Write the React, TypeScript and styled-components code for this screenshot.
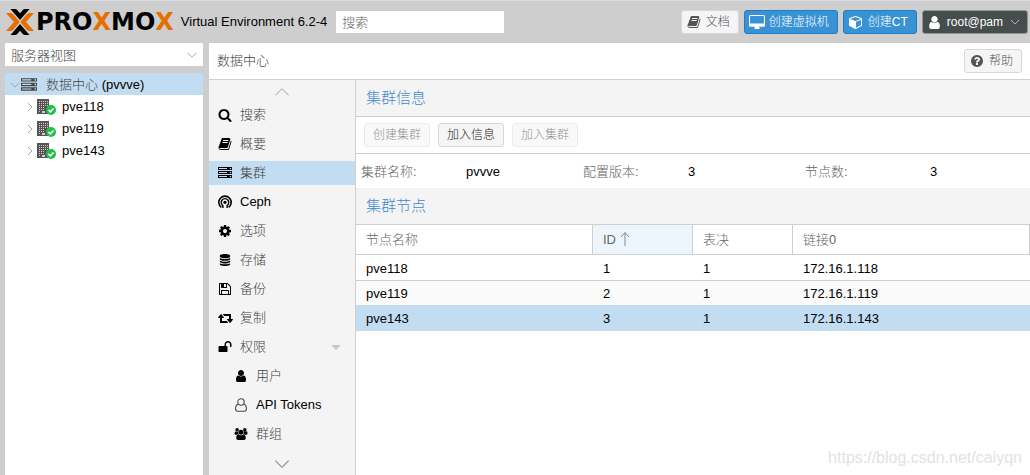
import React from 'react';
import styled, { createGlobalStyle } from 'styled-components';

const color = {
  frame: '#cecece',
  line: '#cfcfcf',
  pale: '#f4f4f4',
  selected: '#c2ddf2',
  blue: '#3892d4',
  heading: '#4189cc',
  ink: '#000',
  soft: '#444',
  label: '#666',
};

const sans = '"Liberation Sans", "Noto Sans CJK SC", sans-serif';

const GlobalStyle = createGlobalStyle`
  *, *::before, *::after { box-sizing: border-box; }
  body { margin: 0; background: ${color.frame}; color: ${color.ink}; }
  body, button, input, select, table { font-family: ${sans}; font-size: 13px; font-weight: 300; line-height: 20px; }
  ul, dl, dd, h1, h2 { margin: 0; padding: 0; font-weight: 300; }
  ul { list-style: none; }
  svg { display: block; flex: none; }
`;

/* ---------- icons ---------- */

const circle =
  'M1664 896q0 209-103 385.5t-279.5 279.5-385.5 103-385.5-103-279.5-279.5-103-385.5 103-385.5 279.5-279.5 385.5-103 385.5 103 279.5 279.5 103 385.5z';
const stack =
  'q237 0 443-43t325-127v170q0 69-103 128t-280 93.5-385 34.5-385-34.5-280-93.5-103-128v-170q119 84 325 127t443 43z';
const dot = 'q0-40-28-68t-68-28-68 28-28 68 28 68 68 28 68-28 28-68z';
const bookLine = 'q-4 13 2 22.5t20 9.5h608q13 0 25.5-9.5t16.5-22.5l21-64q4-13-2-22.5t-20-9.5h-608q-13 0-25.5 9.5t-16.5 22.5z';

const icons = {
  search: { w: 1792, d: 'M1216 832q0-185-131.5-316.5t-316.5-131.5-316.5 131.5-131.5 316.5 131.5 316.5 316.5 131.5 316.5-131.5 131.5-316.5zm512 832q0 52-38 90t-90 38q-54 0-90-38l-343-342q-179 124-399 124-143 0-273.5-55.5t-225-150-150-225-55.5-273.5 55.5-273.5 150-225 225-150 273.5-55.5 273.5 55.5 225 150 150 225 55.5 273.5q0 220-124 399l343 343q37 37 37 90z' },
  book: { w: 1792, d: 'M1703 478q40 57 18 129l-275 906q-19 64-76.5 107.5t-122.5 43.5h-923q-77 0-148.5-53.5t-99.5-131.5q-24-67-2-127 0-4 3-27t4-37q1-8-3-21.5t-3-19.5q2-11 8-21t16.5-23.5 16.5-23.5q23-38 45-91.5t30-91.5q3-10 .5-30t-.5-28q3-11 17-28t17-23q21-36 42-92t25-90q1-9-2.5-32t.5-28q4-13 22-30.5t22-22.5q19-26 42.5-84.5t27.5-96.5q1-8-3-25.5t-2-26.5q2-8 9-18t18-23 17-21q8-12 16.5-30.5t15-35 16-36 19.5-32 26.5-23.5 36-11.5 47.5 5.5l-1 3q38-9 51-9h761q74 0 114 56t18 130l-274 906q-36 119-71.5 153.5t-128.5 34.5h-869q-27 0-38 15-11 16-1 43 24 70 144 70h923q29 0 56-15.5t35-41.5l300-987q7-22 5-57 38 15 59 43z' + 'M639 480' + bookLine + 'M556 736' + bookLine },
  server: { w: 1792, d: 'M128 1408h1024v-128h-1024v128zM128 896h1024v-128h-1024v128zM1696 1344' + dot + 'M128 384h1024v-128h-1024v128zM1696 832' + dot + 'M1696 320' + dot + 'M1792 1152v384h-1792v-384h1792zM1792 640v384h-1792v-384h1792zM1792 128v384h-1792v-384h1792z' },
  cog: { w: 1792, d: 'M1152 896q0-106-75-181t-181-75-181 75-75 181 75 181 181 75 181-75 75-181zm512-109v222q0 12-8 23t-20 13l-185 28q-19 54-39 91 35 50 107 138 10 12 10 25t-9 23q-27 37-99 108t-94 71q-12 0-26-9l-138-108q-44 23-91 38-16 136-29 186-7 28-36 28h-222q-14 0-24.5-8.5t-11.5-21.5l-28-184q-49-16-90-37l-141 107q-10 9-25 9-14 0-25-11-126-114-165-168-7-10-7-23 0-12 8-23 15-21 51-66.5t54-70.5q-27-50-41-99l-183-27q-13-2-21-12.5t-8-23.5v-222q0-12 8-23t19-13l186-28q14-46 39-92-40-57-107-138-10-12-10-24 0-10 9-23 26-36 98.5-107.5t94.5-71.5q13 0 26 10l138 107q44-23 91-38 16-136 29-186 7-28 36-28h222q14 0 24.5 8.5t11.5 21.5l28 184q49 16 90 37l142-107q9-9 24-9 13 0 25 10 129 119 165 170 7 8 7 22 0 12-8 23-15 21-51 66.5t-54 70.5q26 50 41 98l183 28q13 2 21 12.5t8 23.5z' },
  database: { w: 1792, d: 'M896 768' + stack + 'M896 1536' + stack + 'M896 1152' + stack + 'M896 0q208 0 385 34.5t280 93.5 103 128v128q0 69-103 128t-280 93.5-385 34.5-385-34.5-280-93.5-103-128v-128q0-69 103-128t280-93.5 385-34.5z' },
  floppy: { w: 1792, d: 'M512 1536h768v-384h-768v384zm896 0h128v-896q0-14-10-38.5t-20-34.5l-281-281q-10-10-34-20t-39-10v416q0 40-28 68t-68 28h-576q-40 0-68-28t-28-68v-416h-128v1280h128v-416q0-40 28-68t68-28h832q40 0 68 28t28 68v416zm-384-928v-320q0-13-9.5-22.5t-22.5-9.5h-192q-13 0-22.5 9.5t-9.5 22.5v320q0 13 9.5 22.5t22.5 9.5h192q13 0 22.5-9.5t9.5-22.5zm640 32v928q0 40-28 68t-68 28h-1344q-40 0-68-28t-28-68v-1344q0-40 28-68t68-28h928q40 0 88 20t76 48l280 280q28 28 48 76t20 88z' },
  retweet: { w: 1920, d: 'M1280 1504q0 13-9.5 22.5t-22.5 9.5h-960q-8 0-13.5-2t-9-7-5.5-8-3-11.5-1-11.5v-600h-192q-26 0-45-19t-19-45q0-24 15-41l320-384q19-22 49-22t49 22l320 384q15 17 15 41 0 26-19 45t-45 19h-192v384h576q16 0 25 11l160 192q7 10 7 21zm640-416q0 24-15 41l-320 384q-20 23-49 23t-49-23l-320-384q-15-17-15-41 0-26 19-45t45-19h192v-384h-576q-16 0-25-12l-160-192q-7-9-7-20 0-13 9.5-22.5t22.5-9.5h960q8 0 13.5 2t9 7 5.5 8 3 11.5 1 11.5v600h192q26 0 45 19t19 45z' },
  unlock: { w: 1792, d: 'M1728 576v256q0 26-19 45t-45 19h-64q-26 0-45-19t-19-45v-256q0-106-75-181t-181-75-181 75-75 181v192h96q40 0 68 28t28 68v576q0 40-28 68t-68 28h-960q-40 0-68-28t-28-68v-576q0-40 28-68t68-28h672v-192q0-185 131.5-316.5t316.5-131.5 316.5 131.5 131.5 316.5z' },
  user: { w: 1792, d: 'M1536 1399q0 109-62.5 187t-150.5 78h-854q-88 0-150.5-78t-62.5-187q0-85 8.5-160.5t31.5-152 58.5-131 94-89 134.5-34.5q131 128 313 128t313-128q76 0 134.5 34.5t94 89 58.5 131 31.5 152 8.5 160.5zm-256-887q0 159-112.5 271.5t-271.5 112.5-271.5-112.5-112.5-271.5 112.5-271.5 271.5-112.5 271.5 112.5 112.5 271.5z' },
  users: { w: 2048, d: 'M657 896q-162 5-265 128h-134q-82 0-138-40.5t-56-118.5q0-353 124-353 6 0 43.5 21t97.5 42.5 119 21.5q67 0 133-23-5 37-5 66 0 159 93 293zm1071 637q0 120-73 189.5t-194 69.5h-874q-121 0-194-69.5t-73-189.5q0-53 3.5-103.5t14-109 26.5-108.5 43-97.5 62-81 85.5-53.5 111.5-20q10 0 43 21.5t73 48 107 48 135 21.5 135-21.5 107-48 73-48 43-21.5q61 0 111.5 20t85.5 53.5 62 81 43 97.5 26.5 108.5 14 109 3.5 103.5zm-1024-1277q0 106-75 181t-181 75-181-75-75-181 75-181 181-75 181 75 75 181zm704 384q0 159-112.5 271.5t-271.5 112.5-271.5-112.5-112.5-271.5 112.5-271.5 271.5-112.5 271.5 112.5 112.5 271.5zm576 225q0 78-56 118.5t-138 40.5h-134q-103-123-265-128 93-134 93-293 0-29-5-66 66 23 133 23 59 0 119-21.5t97.5-42.5 43.5-21q124 0 124 353zm-128-609q0 106-75 181t-181 75-181-75-75-181 75-181 181-75 181 75 75 181z' },
  desktop: { w: 1920, d: 'M1792 992v-832q0-13-9.5-22.5t-22.5-9.5h-1600q-13 0-22.5 9.5t-9.5 22.5v832q0 13 9.5 22.5t22.5 9.5h1600q13 0 22.5-9.5t9.5-22.5zm128-832v1088q0 66-47 113t-113 47h-544q0 37 16 77.5t32 71 16 43.5q0 26-19 45t-45 19h-512q-26 0-45-19t-19-45q0-14 16-44t32-70 16-78h-544q-66 0-113-47t-47-113v-1088q0-66 47-113t113-47h1600q66 0 113 47t47 113z' },
  cube: { w: 1664, d: 'M896 1629l640-349v-636l-640 233v752zm-64-865l698-254-698-254-698 254zm832-252v768q0 35-18 65t-49 47l-704 384q-28 16-61 16t-61-16l-704-384q-31-17-49-47t-18-65v-768q0-40 23-73t61-47l704-256q22-8 44-8t44 8l704 256q38 14 61 47t23 73z' },
  question: { w: 1792, d: 'M1024 1376v-192q0-14-9-23t-23-9h-192q-14 0-23 9t-9 23v192q0 14 9 23t23 9h192q14 0 23-9t9-23zm256-672q0-88-55.5-163t-138.5-116-170-41q-243 0-371 213-15 24 8 42l132 100q7 6 19 6 16 0 25-12 53-68 86-92 34-24 86-24 48 0 85.5 26t37.5 59q0 38-20 61t-68 45q-63 28-115.5 86.5t-52.5 125.5v36q0 14 9 23t23 9h192q14 0 23-9t9-23q0-19 21.5-49.5t54.5-49.5q32-18 49-28.5t46-35 44.5-48 28-60.5 12.5-81z' + circle },
};

type IconName = keyof typeof icons;

const Icon = ({ name, size = 14 }: { name: IconName; size?: number }) => {
  const { w, d } = icons[name];
  return (
    <svg width={Math.round((size * w) / 1792)} height={size} viewBox={`0 0 ${w} 1792`} fill="currentColor" fillRule="evenodd" aria-hidden="true">
      <path d={d} />
    </svg>
  );
};

const CephIcon = () => (
  <svg width="14" height="14" viewBox="0 0 14 14" fill="none" stroke="currentColor" strokeWidth="1.6" aria-hidden="true">
    <path d="M3.4 12.4A6.2 6.2 0 1 1 10.6 12.4" />
    <path d="M4.9 12.9V10.6A3.8 3.8 0 1 1 9.1 10.6V12.9" strokeWidth="1.4" />
    <circle cx="7" cy="7.3" r="1.6" fill="currentColor" stroke="none" />
  </svg>
);

const UserOutlineIcon = () => (
  <svg width="14" height="14" viewBox="0 0 14 14" fill="none" stroke="#3b4a55" strokeWidth="1.1" aria-hidden="true">
    <circle cx="7" cy="4" r="3.2" />
    <path d="M4.4 6.2C2.4 6.6 1.6 8.6 1.6 10.8C1.6 12.4 2.4 13.2 3.6 13.2H10.4C11.6 13.2 12.4 12.4 12.4 10.8C12.4 8.6 11.6 6.6 9.6 6.2" />
  </svg>
);

const NodeIcon = () => (
  <svg width="20" height="16" viewBox="0 0 20 16" aria-hidden="true">
    <path fill="#555" d="M0 0H12V15H0Z" />
    <path fill="#d2cdc4" d="M2 2h1v1h-1zM4 2h1v1h-1zM6 2h1v1h-1zM8 2h1v1h-1zM10 2h1v1h-1zM2 4h1v1h-1zM4 4h1v1h-1zM6 4h1v1h-1zM8 4h1v1h-1zM10 4h1v1h-1zM2 6h1v1h-1zM4 6h1v1h-1zM6 6h1v1h-1zM8 6h1v1h-1zM10 6h1v1h-1zM2 8h1v1h-1zM4 8h1v1h-1zM6 8h1v1h-1zM2 10h1v1h-1zM4 10h1v1h-1zM6 10h1v1h-1zM2 12h1v1h-1zM5 12h3v2h-3z" />
    <circle cx="14" cy="11" r="5" fill="#21bf4b" />
    <path d="M11.500 11L13.300 12.800L16.500 9.500" fill="none" stroke="#fff" strokeWidth="1.6" />
  </svg>
);

const paths = {
  down: 'M1 1L6 6L11 1',
  up: 'M1 6L6 1L11 6',
};

const Chevron = ({ to, width = 10, stroke = '#999' }: { to: 'up' | 'down'; width?: number; stroke?: string }) => (
  <svg width={width} height={Math.round(width * 0.6)} viewBox="0 0 12 7" fill="none" stroke={stroke} strokeWidth={width > 12 ? 0.8 : 1} aria-hidden="true">
    <path d={paths[to]} />
  </svg>
);

const Expander = () => (
  <svg width="6" height="10" viewBox="0 0 6 10" fill="none" stroke="#aaa" aria-hidden="true">
    <path d="M1 1L5 5L1 9" />
  </svg>
);

const SortArrow = () => (
  <svg width="10" height="14" viewBox="0 0 10 14" fill="none" stroke="#888" aria-hidden="true">
    <path d="M5 0.7V14M1 5L5 0.7L9 5" />
  </svg>
);

const LogoMark = () => (
  <svg width="28" height="26" viewBox="0 0 28 26" aria-hidden="true">
    <g fill="#e57000">
      <path d="M0 4H4.5Q6 4 7 5L13 12Q13.8 13 13 14L7 21Q6 22 4.5 22H0L8 13Z" />
      <path d="M28 4H23.5Q22 4 21 5L15 12Q14.2 13 15 14L21 21Q22 22 23.5 22H28L20 13Z" />
    </g>
    <g fill="#000">
      <path d="M4.500 0H9Q10.300 0 11.200 1L14 4.300L16.800 1Q17.700 0 19 0H23.500L14 11Z" />
      <path d="M4.500 26H9Q10.300 26 11.200 25L14 21.700L16.800 25Q17.700 26 19 26H23.500L14 15Z" />
    </g>
  </svg>
);

/* ---------- shell ---------- */

const Page = styled.div`
  min-height: 100vh;
  display: flex;
  flex-direction: column;
  background: ${color.frame};
`;

const TopBar = styled.header`
  display: flex;
  align-items: center;
  height: 43px;
  padding: 0 2px 0 6px;
  border-top: 1px solid #dadbe2;
`;

const Logo = styled.a`
  display: flex;
  align-items: center;
  gap: 2px;
  margin-right: 7px;
  color: #000;
  text-decoration: none;
`;

const Wordmark = styled.span`
  font: 700 24px/26px "DejaVu Sans", sans-serif;
  b { color: #e57000; }
`;

const Product = styled.span`
  margin-right: 9px;
  white-space: nowrap;
`;

const SearchBox = styled.input`
  width: 168px;
  height: 22px;
  padding: 0 6px;
  border: 0;
  border-radius: 0;
  background: #fff;
  &::placeholder { color: ${color.label}; opacity: 1; }
`;

const Actions = styled.div`
  display: flex;
  gap: 5px;
  margin-left: auto;
`;

const tones = {
  plain: { bg: '#f5f5f5', edge: '#d8d8d8', text: '#555', right: 8 },
  primary: { bg: '#3892d4', edge: '#1f7dc4', text: '#fff', right: 8 },
  dark: { bg: '#464d4d', edge: '#8a9a98', text: '#fff', right: 4 },
};

const Button = styled.button<{ $tone?: keyof typeof tones }>`
  display: flex;
  align-items: center;
  gap: 4px;
  height: 24px;
  padding: 0 ${p => tones[p.$tone ?? 'plain'].right}px 0 4px;
  border: 1px solid ${p => tones[p.$tone ?? 'plain'].edge};
  border-radius: 3px;
  background: ${p => tones[p.$tone ?? 'plain'].bg};
  color: ${p => tones[p.$tone ?? 'plain'].text};
  font-size: 12px;
  white-space: nowrap;
`;

const IconCell = styled.span`
  display: flex;
  justify-content: center;
  flex: none;
  width: 16px;
`;

const Body = styled.div`
  flex: 1;
  display: flex;
  gap: 6px;
  padding-left: 5px;
`;

/* ---------- resource tree ---------- */

const Sidebar = styled.aside`
  flex: none;
  display: flex;
  flex-direction: column;
  gap: 7px;
  width: 198px;
`;

const SelectWrap = styled.div`
  position: relative;
  svg { position: absolute; right: 6px; top: 9px; pointer-events: none; }
`;

const ViewSelect = styled.select`
  display: block;
  width: 100%;
  height: 23px;
  padding: 2px 6px 0;
  border: 0;
  border-radius: 0;
  background: #fff;
  color: ${color.soft};
  appearance: none;
`;

const Tree = styled.ul`
  flex: 1;
  background: #fff;
`;

const TreeRow = styled.a<{ $root?: boolean }>`
  display: flex;
  align-items: center;
  gap: ${p => (p.$root ? 1 : 4)}px;
  height: 22px;
  padding-top: 2px;
  padding-left: ${p => (p.$root ? 5 : 22)}px;
  background: ${p => (p.$root ? color.selected : 'transparent')};
  color: ${color.ink};
  text-decoration: none;
`;

const TreeLabel = styled.span<{ $gap?: number }>`
  padding-left: ${p => p.$gap ?? 0}px;
`;

const Cjk = styled.span`
  color: ${color.soft};
`;

/* ---------- main panel ---------- */

const Main = styled.main`
  flex: 1;
  display: flex;
  flex-direction: column;
  min-width: 0;
  background: #fff;
`;

const TitleBar = styled.div`
  display: flex;
  align-items: center;
  justify-content: space-between;
  height: 37px;
  padding: 0 8px;
  border-bottom: 1px solid ${color.line};
  h1 { font-size: 13px; color: ${color.soft}; }
`;

const Split = styled.div`
  flex: 1;
  display: flex;
`;

const Nav = styled.nav`
  flex: none;
  display: flex;
  flex-direction: column;
  width: 147px;
  border-right: 1px solid ${color.line};
  background: ${color.pale};
`;

const Scroller = styled.button`
  display: flex;
  align-items: center;
  justify-content: center;
  height: 23px;
  padding: 0;
  border: 0;
  background: none;
`;

const NavList = styled.ul`
  display: flex;
  flex-direction: column;
  gap: 5px;
  padding-bottom: 6px;
`;

const NavLink = styled.a<{ $active?: boolean; $nested?: boolean }>`
  display: flex;
  align-items: center;
  gap: 7px;
  height: 24px;
  padding: 0 14px 0 ${p => (p.$nested ? 24 : 8)}px;
  background: ${p => (p.$active ? color.selected : 'transparent')};
  color: ${color.ink};
  text-decoration: none;
`;

const Caret = styled.i`
  margin-left: auto;
  border: 5px solid transparent;
  border-top-color: #c8c8c8;
  border-bottom: 0;
`;

const Content = styled.section`
  position: relative;
  flex: 1;
  min-width: 0;
`;

const SectionTitle = styled.h2`
  height: 37px;
  padding: 0 10px;
  border-bottom: 1px solid ${color.line};
  background: ${color.pale};
  color: ${color.heading};
  font-size: 15px;
  line-height: 36px;
`;

const Toolbar = styled.div`
  display: flex;
  align-items: center;
  gap: 8px;
  height: 37px;
  padding: 0 8px;
  border-bottom: 1px solid ${color.line};
`;

const ToolButton = styled(Button)`
  padding: 0 8px;
  color: #222;
  &:disabled { opacity: 0.5; }
`;

const Facts = styled.dl`
  display: grid;
  grid-template-columns: repeat(3, 1fr);
  height: 34px;
  padding: 2px 3px 0 5px;
  align-items: center;
`;

const Fact = styled.div<{ $label?: number }>`
  display: grid;
  grid-template-columns: ${p => p.$label ?? 105}px 1fr;
  dt { color: ${color.label}; }
`;

const Grid = styled.table`
  width: 100%;
  table-layout: fixed;
  border-collapse: separate;
  border-spacing: 0;
`;

const HeadCell = styled.th<{ $sorted?: boolean }>`
  height: 30px;
  padding: 0 10px;
  border-right: 1px solid ${color.line};
  border-bottom: 1px solid ${color.line};
  background: ${p => (p.$sorted ? '#edf5fc' : '#fff')};
  color: ${color.label};
  font-weight: 300;
  text-align: left;
  svg { display: inline-block; margin-left: 4px; vertical-align: -2px; }
`;

const Row = styled.tr<{ $state?: 'alt' | 'selected' }>`
  background: ${p => (p.$state === 'selected' ? color.selected : p.$state === 'alt' ? '#fafafa' : '#fff')};
  td {
    height: ${p => (p.$state === 'alt' ? 24 : 26)}px;
    padding: 2px 10px 0;
    border-bottom: ${p => (p.$state ? '0' : `1px solid ${color.line}`)};
  }
`;

const Watermark = styled.div`
  position: absolute;
  right: 8px;
  bottom: 5px;
  color: #e2e2e2;
  font-size: 16px;
  line-height: 24px;
`;

/* ---------- data ---------- */

const nav: { label: string; icon: IconName | 'ceph' | 'userOutline'; latin?: boolean; active?: boolean; nested?: boolean; open?: boolean }[] = [
  { label: '搜索', icon: 'search' },
  { label: '概要', icon: 'book' },
  { label: '集群', icon: 'server', active: true },
  { label: 'Ceph', icon: 'ceph', latin: true },
  { label: '选项', icon: 'cog' },
  { label: '存储', icon: 'database' },
  { label: '备份', icon: 'floppy' },
  { label: '复制', icon: 'retweet' },
  { label: '权限', icon: 'unlock', open: true },
  { label: '用户', icon: 'user', nested: true },
  { label: 'API Tokens', icon: 'userOutline', latin: true, nested: true },
  { label: '群组', icon: 'users', nested: true },
];

const nodes: { name: string; id: number; votes: number; link: string; state?: 'alt' | 'selected' }[] = [
  { name: 'pve118', id: 1, votes: 1, link: '172.16.1.118' },
  { name: 'pve119', id: 2, votes: 1, link: '172.16.1.119', state: 'alt' },
  { name: 'pve143', id: 3, votes: 1, link: '172.16.1.143', state: 'selected' },
];

const NavIcon = ({ icon }: { icon: (typeof nav)[number]['icon'] }) => {
  if (icon === 'ceph') return <CephIcon />;
  if (icon === 'userOutline') return <UserOutlineIcon />;
  return <Icon name={icon} size={icon === 'users' || icon === 'database' ? 12 : 14} />;
};

export default function App() {
  return (
    <Page>
      <GlobalStyle />
      <TopBar>
        <Logo href="#" aria-label="Proxmox">
          <LogoMark />
          <Wordmark>PRO<b>X</b>MO<b>X</b></Wordmark>
        </Logo>
        <Product>Virtual Environment 6.2-4</Product>
        <SearchBox type="text" placeholder="搜索" aria-label="搜索" />
        <Actions>
          <Button><IconCell><Icon name="book" /></IconCell>文档</Button>
          <Button $tone="primary"><IconCell><Icon name="desktop" size={15} /></IconCell>创建虚拟机</Button>
          <Button $tone="primary"><IconCell><Icon name="cube" /></IconCell>创建CT</Button>
          <Button $tone="dark">
            <IconCell><Icon name="user" size={15} /></IconCell>
            root@pam
            <IconCell><Chevron to="down" stroke="#ccc" /></IconCell>
          </Button>
        </Actions>
      </TopBar>

      <Body>
        <Sidebar>
          <SelectWrap>
            <ViewSelect aria-label="服务器视图">
              <option>服务器视图</option>
            </ViewSelect>
            <Chevron to="down" />
          </SelectWrap>
          <Tree>
            <li>
              <TreeRow href="#" $root>
                <Chevron to="down" />
                <Cjk><Icon name="server" size={16} /></Cjk>
                <TreeLabel $gap={8}><Cjk>数据中心</Cjk> (pvvve)</TreeLabel>
              </TreeRow>
              <ul>
                {nodes.map(n => (
                  <li key={n.name}>
                    <TreeRow href="#">
                      <Expander />
                      <NodeIcon />
                      <TreeLabel $gap={1}>{n.name}</TreeLabel>
                    </TreeRow>
                  </li>
                ))}
              </ul>
            </li>
          </Tree>
        </Sidebar>

        <Main>
          <TitleBar>
            <h1>数据中心</h1>
            <Button><IconCell><Icon name="question" /></IconCell>帮助</Button>
          </TitleBar>
          <Split>
            <Nav>
              <Scroller aria-label="向上"><Chevron to="up" width={16} stroke="#bbb" /></Scroller>
              <NavList>
                {nav.map(item => (
                  <li key={item.label}>
                    <NavLink href="#" $active={item.active} $nested={item.nested}>
                      <IconCell><NavIcon icon={item.icon} /></IconCell>
                      {item.latin ? item.label : <Cjk>{item.label}</Cjk>}
                      {item.open && <Caret />}
                    </NavLink>
                  </li>
                ))}
              </NavList>
              <Scroller aria-label="向下"><Chevron to="down" width={16} stroke="#888" /></Scroller>
            </Nav>

            <Content>
              <SectionTitle>集群信息</SectionTitle>
              <Toolbar>
                <ToolButton disabled>创建集群</ToolButton>
                <ToolButton>加入信息</ToolButton>
                <ToolButton disabled>加入集群</ToolButton>
              </Toolbar>
              <Facts>
                <Fact><dt>集群名称:</dt><dd>pvvve</dd></Fact>
                <Fact><dt>配置版本:</dt><dd>3</dd></Fact>
                <Fact $label={125}><dt>节点数:</dt><dd>3</dd></Fact>
              </Facts>
              <SectionTitle>集群节点</SectionTitle>
              <Grid>
                <colgroup>
                  <col />
                  <col width="100" />
                  <col width="100" />
                  <col />
                </colgroup>
                <thead>
                  <tr>
                    <HeadCell>节点名称</HeadCell>
                    <HeadCell $sorted aria-sort="ascending">ID<SortArrow /></HeadCell>
                    <HeadCell>表决</HeadCell>
                    <HeadCell>链接0</HeadCell>
                  </tr>
                </thead>
                <tbody>
                  {nodes.map(n => (
                    <Row key={n.name} $state={n.state}>
                      <td>{n.name}</td>
                      <td>{n.id}</td>
                      <td>{n.votes}</td>
                      <td>{n.link}</td>
                    </Row>
                  ))}
                </tbody>
              </Grid>
              <Watermark>https://blog.csdn.net/caiyqn</Watermark>
            </Content>
          </Split>
        </Main>
      </Body>
    </Page>
  );
}
